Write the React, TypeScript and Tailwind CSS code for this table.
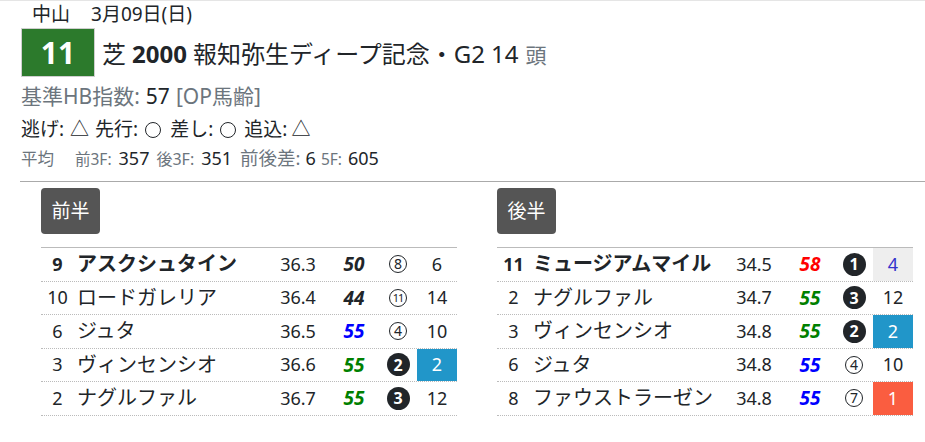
import React from "react";

type Row = {
  no: string;
  name: string;
  time: string;
  idx: string;
  idxColor: string;
  mark: string;
  filled: boolean;
  last: string;
  lastCls: string;
  bold?: boolean;
};

const first: Row[] = [
  { no: "9", name: "アスクシュタイン", time: "36.3", idx: "50", idxColor: "text-[#212529]", mark: "8", filled: false, last: "6", lastCls: "", bold: true },
  { no: "10", name: "ロードガレリア", time: "36.4", idx: "44", idxColor: "text-[#212529]", mark: "11", filled: false, last: "14", lastCls: "" },
  { no: "6", name: "ジュタ", time: "36.5", idx: "55", idxColor: "text-[#0000ff]", mark: "4", filled: false, last: "10", lastCls: "" },
  { no: "3", name: "ヴィンセンシオ", time: "36.6", idx: "55", idxColor: "text-[#008000]", mark: "2", filled: true, last: "2", lastCls: "bg-[#2196c9] text-white" },
  { no: "2", name: "ナグルファル", time: "36.7", idx: "55", idxColor: "text-[#008000]", mark: "3", filled: true, last: "12", lastCls: "" },
];

const second: Row[] = [
  { no: "11", name: "ミュージアムマイル", time: "34.5", idx: "58", idxColor: "text-[#ff0000]", mark: "1", filled: true, last: "4", lastCls: "bg-[#eeeeee] text-[#3333cc]", bold: true },
  { no: "2", name: "ナグルファル", time: "34.7", idx: "55", idxColor: "text-[#008000]", mark: "3", filled: true, last: "12", lastCls: "" },
  { no: "3", name: "ヴィンセンシオ", time: "34.8", idx: "55", idxColor: "text-[#008000]", mark: "2", filled: true, last: "2", lastCls: "bg-[#2196c9] text-white" },
  { no: "6", name: "ジュタ", time: "34.8", idx: "55", idxColor: "text-[#0000ff]", mark: "4", filled: false, last: "10", lastCls: "" },
  { no: "8", name: "ファウストラーゼン", time: "34.8", idx: "55", idxColor: "text-[#0000ff]", mark: "7", filled: false, last: "1", lastCls: "bg-[#fa5d40] text-white" },
];

function Mark({ n, filled }: { n: string; filled: boolean }) {
  if (filled) {
    return (
      <span className="flex h-[23px] w-[23px] items-center justify-center rounded-full bg-[#212529] text-[16px] font-bold leading-none text-white">
        {n}
      </span>
    );
  }
  return (
    <span
      className={`flex h-[18px] w-[18px] items-center justify-center rounded-full border border-[#212529] leading-none text-[#212529] ${
        n.length > 1 ? "text-[11px] tracking-[-1px]" : "text-[14px]"
      }`}
    >
      {n}
    </span>
  );
}

// ○ drawn as a ring so it keeps the reference size
function Ring() {
  return <span className="inline-block h-[16px] w-[16px] rounded-full border-[1.5px] border-[#212529]" />;
}

function Panel({ title, rows }: { title: string; rows: Row[] }) {
  return (
    <div className="w-[416px] shrink-0">
      <div className="flex h-[46px] w-[59px] items-center justify-center rounded-[4px] bg-[#555555] text-[19px] text-white">
        {title}
      </div>
      <div className="mt-[13px] border-t border-[#bbbbbb]">
        {rows.map((r, i) => (
          <div
            key={i}
            className="grid h-[33.5px] grid-cols-[33px_193px_62px_50px_38px_40px] border-b border-dotted border-[#bbbbbb] text-[18px] text-[#212529]"
          >
            <div className={`flex items-center justify-center ${r.bold ? "font-bold" : ""}`}>{r.no}</div>
            <div className={`flex items-center pl-[3px] text-[20px] whitespace-nowrap ${r.bold ? "font-bold" : ""}`}>
              {r.name}
            </div>
            <div className="flex items-center justify-center">{r.time}</div>
            <div className={`flex items-center justify-center text-[19px] font-bold italic ${r.idxColor}`}>{r.idx}</div>
            <div className="flex items-center justify-center">
              <Mark n={r.mark} filled={r.filled} />
            </div>
            <div className={`flex items-center justify-center ${r.lastCls}`}>{r.last}</div>
          </div>
        ))}
      </div>
    </div>
  );
}

export default function App() {
  return (
    <div
      className="h-[442px] w-[925px] overflow-hidden border-t border-[#e5e5e5] bg-white text-[#212529]"
      style={{ fontFamily: '"Noto Sans", "Noto Sans CJK JP", sans-serif' }}
    >
      <div className="pl-[21px]">
        <div className="flex h-[27px] items-center pl-[11px] text-[19px] leading-none">
          <span>中山</span>
          <span className="ml-[21px]">3月09日(日)</span>
        </div>
        <div className="flex h-[49px] items-center">
          <div className="flex h-[49px] w-[74px] items-center justify-center border border-[#cfcfcf] bg-[#2c7a2c] text-[30px] font-bold text-white">
            11
          </div>
          <div className="ml-[7px] flex items-baseline pt-[3px] text-[24px] leading-none">
            <span>芝</span>
            <span className="ml-[6px] font-bold">2000</span>
            <span className="ml-[6px]">報知弥生ディープ記念・G2</span>
            <span className="ml-[6px]">14</span>
            <span className="ml-[7px] text-[21px] text-[#6c757d]">頭</span>
          </div>
        </div>
        <div className="flex h-[36px] items-center pt-[2px] text-[21px] leading-none text-[#6c757d]">
          <span>基準HB指数:</span>
          <span className="ml-[6px] text-[#212529]">57</span>
          <span className="ml-[6px]">[OP馬齢]</span>
        </div>
        <div className="flex h-[33px] items-center text-[19px] leading-none">
          <span>逃げ:</span>
          <span className="ml-[6px] text-[19px]">△</span>
          <span className="ml-[6px]">先行:</span>
          <span className="ml-[7px] flex"><Ring /></span>
          <span className="ml-[9px]">差し:</span>
          <span className="ml-[7px] flex"><Ring /></span>
          <span className="ml-[8px]">追込:</span>
          <span className="ml-[4px] text-[19px]">△</span>
        </div>
        <div className="flex h-[25px] items-baseline pt-[3px] text-[18px] leading-none">
          <span className="text-[16.5px] text-[#6c757d]">平均</span>
          <span className="ml-[21px] text-[15.5px] text-[#6c757d]">前3F:</span>
          <span className="ml-[7px]">357</span>
          <span className="ml-[7px] text-[16px] text-[#6c757d]">後3F:</span>
          <span className="ml-[7px]">351</span>
          <span className="ml-[8px] text-[18.5px] text-[#6c757d]">前後差:</span>
          <span className="ml-[5px]">6</span>
          <span className="ml-[5px] text-[15.5px] text-[#6c757d]">5F:</span>
          <span className="ml-[6px]">605</span>
        </div>
      </div>
      <div className="ml-[20px] mt-[10px] border-t border-[#aaaaaa]" />
      <div className="mt-[6px] flex gap-[40px] pl-[41px]">
        <Panel title="前半" rows={first} />
        <Panel title="後半" rows={second} />
      </div>
    </div>
  );
}
